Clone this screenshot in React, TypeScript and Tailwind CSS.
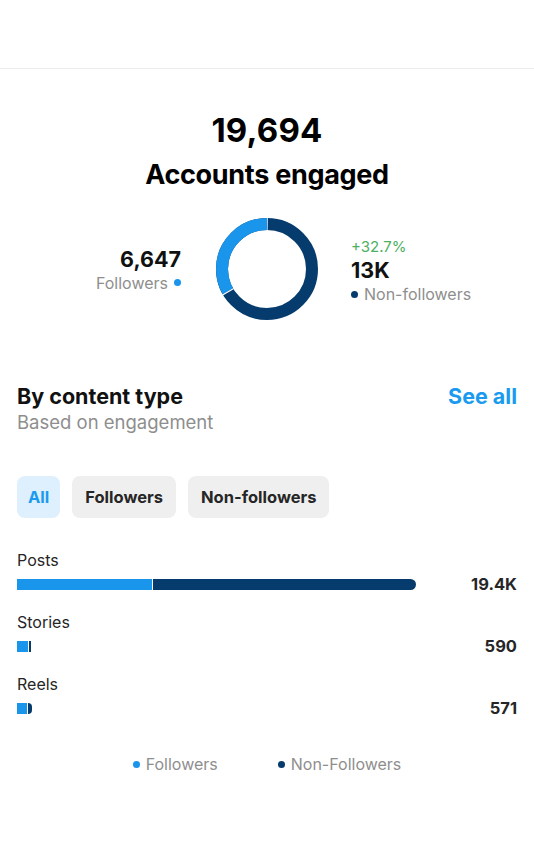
import React from "react";

const LIGHT = "#1a95ec";
const DARK = "#063b6d";

function Donut() {
  const r = 45;
  const c = 2 * Math.PI * r;
  const frac = 0.3375;
  const gap = 1.2;
  return (
    <svg width="104" height="104" viewBox="0 0 104 104">
      <g transform="rotate(-90 52 52)">
        <circle cx="52" cy="52" r={r} fill="none" stroke={DARK} strokeWidth="12" />
        <circle
          cx="52"
          cy="52"
          r={r}
          fill="none"
          stroke={LIGHT}
          strokeWidth="12"
          strokeDasharray={`${c * frac - gap} ${c}`}
          strokeDashoffset={-(c * (1 - frac)) - gap}
        />
        <circle
          cx="52"
          cy="52"
          r={r}
          fill="none"
          stroke="#ffffff"
          strokeWidth="13"
          strokeDasharray={`${gap} ${c}`}
          strokeDashoffset={-(c * (1 - frac))}
        />
        <circle
          cx="52"
          cy="52"
          r={r}
          fill="none"
          stroke="#ffffff"
          strokeWidth="13"
          strokeDasharray={`${gap} ${c}`}
          strokeDashoffset={0.5}
        />
      </g>
    </svg>
  );
}

function Row({ label, value, light, dark, rounded }: { label: string; value: string; light: number; dark: number; rounded?: boolean }) {
  return (
    <div className="flex flex-col">
      <div className="text-[16px] leading-[20px] text-[#262626]">{label}</div>
      <div className="mt-[4px] flex items-center">
        <div className="flex h-[11px] flex-1 items-stretch">
          <div className="h-full" style={{ width: light, background: LIGHT }} />
          <div className="h-full w-[1px] bg-white" />
          <div
            className={rounded ? "h-full rounded-r-full" : "h-full"}
            style={{ width: dark, background: DARK }}
          />
        </div>
        <div className="w-[80px] text-right text-[16.5px] font-bold leading-[20px] text-[#262626]">{value}</div>
      </div>
    </div>
  );
}

export default function App() {
  return (
    <div
      className="min-h-[867px] w-[534px] bg-white"
      style={{ fontFamily: "Inter, 'Liberation Sans', sans-serif" }}
    >
      <div className="h-[69px] border-b border-[#ececec]" />
      <div className="flex flex-col items-center pt-[42px]">
        <div className="text-[33px] font-bold leading-[38px] tracking-[0.2px] text-black">19,694</div>
        <div className="mt-[10px] text-[27px] font-bold leading-[32px] tracking-[-0.3px] text-black">Accounts engaged</div>
      </div>
      <div className="mt-[26px] flex items-center justify-center">
        <div className="flex w-[170px] flex-col items-end pr-[2px]">
          <div className="text-[21.5px] font-bold leading-[26px] text-[#111]">6,647</div>
          <div className="mt-[1px] flex items-center gap-[6px] text-[16px] leading-[20px] text-[#8e8e8e]">
            Followers
            <span className="inline-block h-[7px] w-[7px] rounded-full" style={{ background: LIGHT }} />
          </div>
        </div>
        <div className="mx-[32px] flex items-center">
          <Donut />
        </div>
        <div className="flex w-[170px] flex-col items-start pt-[4px]">
          <div className="text-[15px] leading-[18px] text-[#4caf62]">+32.7%</div>
          <div className="mt-[1px] text-[21.5px] font-bold leading-[26px] text-[#111]">13K</div>
          <div className="mt-[1px] flex items-center gap-[6px] text-[16px] leading-[20px] text-[#8e8e8e]">
            <span className="inline-block h-[7px] w-[7px] rounded-full" style={{ background: DARK }} />
            Non-followers
          </div>
        </div>
      </div>

      <div className="mt-[62px] flex items-start justify-between px-[17px]">
        <div className="flex flex-col">
          <div className="text-[21.5px] font-bold leading-[26px] text-[#111]">By content type</div>
          <div className="mt-[1px] text-[18.5px] leading-[24px] text-[#8e8e8e]">Based on engagement</div>
        </div>
        <div className="text-[21.5px] font-bold leading-[26px] text-[#1a9bef]">See all</div>
      </div>

      <div className="mt-[42px] flex gap-[12px] px-[17px]">
        <div className="flex h-[42px] items-center rounded-[8px] bg-[#deeffd] px-[11px] text-[16.5px] font-bold text-[#1a9bef]">All</div>
        <div className="flex h-[42px] items-center rounded-[8px] bg-[#efefef] px-[13px] text-[16.5px] font-bold text-[#262626]">Followers</div>
        <div className="flex h-[42px] items-center rounded-[8px] bg-[#efefef] px-[13px] text-[16.5px] font-bold text-[#262626]">Non-followers</div>
      </div>

      <div className="mt-[32px] flex flex-col gap-[18px] px-[17px]">
        <Row label="Posts" value="19.4K" light={135} dark={263} rounded />
        <Row label="Stories" value="590" light={11} dark={2} />
        <Row label="Reels" value="571" light={10} dark={4} rounded />
      </div>

      <div className="mt-[36px] flex items-center justify-center gap-[60px] text-[16px] leading-[20px] text-[#8e8e8e]">
        <div className="flex items-center gap-[6px]">
          <span className="inline-block h-[7px] w-[7px] rounded-full" style={{ background: LIGHT }} />
          Followers
        </div>
        <div className="flex items-center gap-[6px]">
          <span className="inline-block h-[7px] w-[7px] rounded-full" style={{ background: DARK }} />
          Non-Followers
        </div>
      </div>
    </div>
  );
}
